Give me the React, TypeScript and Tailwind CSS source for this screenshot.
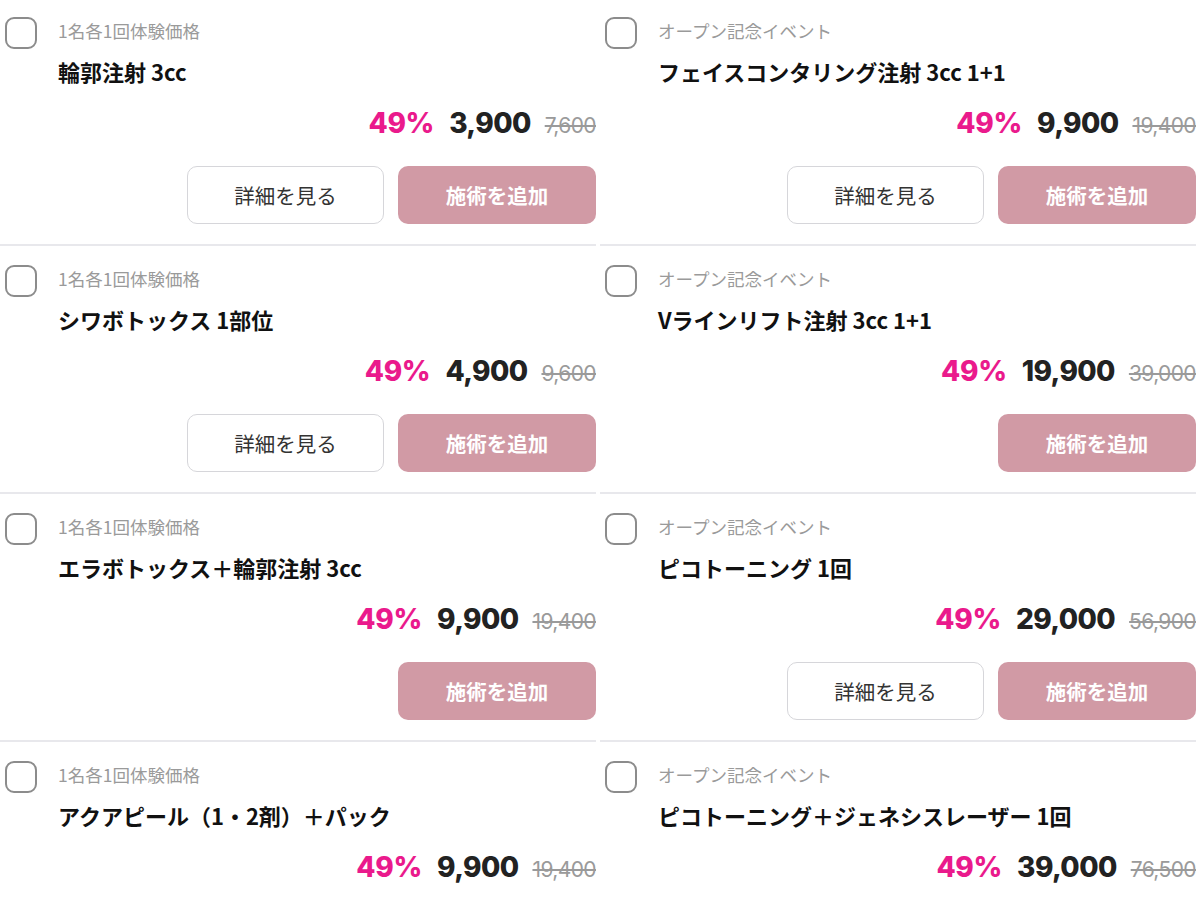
import React from 'react';

interface Item {
  tag: string;
  title: string;
  price: string;
  original: string;
  detail: boolean;
  buttons?: boolean;
}

const TRIAL = '1名各1回体験価格';
const OPEN = 'オープン記念イベント';

// rows are read left, right, left, right...
const items: Item[] = [
  { tag: TRIAL, title: '輪郭注射 3cc', price: '3,900', original: '7,600', detail: true },
  { tag: OPEN, title: 'フェイスコンタリング注射 3cc 1+1', price: '9,900', original: '19,400', detail: true },
  { tag: TRIAL, title: 'シワボトックス 1部位', price: '4,900', original: '9,600', detail: true },
  { tag: OPEN, title: 'Vラインリフト注射 3cc 1+1', price: '19,900', original: '39,000', detail: false },
  { tag: TRIAL, title: 'エラボトックス＋輪郭注射 3cc', price: '9,900', original: '19,400', detail: false },
  { tag: OPEN, title: 'ピコトーニング 1回', price: '29,000', original: '56,900', detail: true },
  // last row is scrolled past the bottom of the viewport
  { tag: TRIAL, title: 'アクアピール（1・2剤）＋パック', price: '9,900', original: '19,400', detail: true, buttons: false },
  { tag: OPEN, title: 'ピコトーニング＋ジェネシスレーザー 1回', price: '39,000', original: '76,500', detail: true, buttons: false },
];

const jp = "font-['Noto_Sans_CJK_JP','Noto_Sans',sans-serif]";
const num = "font-['Inter','Noto_Sans',sans-serif]";

function TreatmentCard({ item }: { item: Item }) {
  return (
    <div className="h-[248px] flex flex-col">
      <div className="flex pt-[17px]">
        <button
          aria-label="select"
          className="ml-[5px] w-8 h-8 shrink-0 rounded-[9px] border-[2.5px] border-[#8c8c8c] bg-white"
        />
        <div className="ml-[21px] flex flex-col">
          <span className={`${jp} mt-[2px] text-[17.5px] leading-[24px] text-[#9a9a9a]`}>{item.tag}</span>
          <span className={`${jp} mt-[14px] text-[22px] leading-[28px] font-bold text-[#111]`}>
            {item.title}
          </span>
        </div>
      </div>

      <div className={`${num} mt-[20px] flex items-baseline justify-end h-[36px]`}>
        <span className="text-[28px] leading-[36px] font-extrabold tracking-[-0.3px] text-[#ea1a8c]">49%</span>
        <span className="ml-[15px] text-[28px] leading-[36px] font-extrabold tracking-[-0.6px] text-[#222]">
          {item.price}
        </span>
        <span className="ml-[14px] text-[21px] leading-[36px] tracking-[-0.6px] text-[#9a9a9a] line-through">
          {item.original}
        </span>
      </div>

      {item.buttons !== false && (
        <>
          <div className="mt-[25px] flex justify-end gap-[14px]">
            {item.detail && (
              <button
                className={`${jp} w-[197px] h-[58px] rounded-[10px] border-[1.5px] border-[#d6d6da] bg-white text-[20.5px] text-[#333]`}
              >
                詳細を見る
              </button>
            )}
            <button
              className={`${jp} w-[198px] h-[58px] rounded-[10px] bg-[#d19aa5] text-[20.5px] font-bold text-white`}
            >
              施術を追加
            </button>
          </div>

          <div className="mt-[20px] h-[2px] bg-[#e8e8ec]" />
        </>
      )}
    </div>
  );
}

export default function App() {
  return (
    <div className="w-[1200px] h-[900px] overflow-hidden bg-white">
      <div className="grid grid-cols-[596px_596px] gap-x-[4px]">
        {items.map((item, i) => (
          <TreatmentCard key={i} item={item} />
        ))}
      </div>
    </div>
  );
}
